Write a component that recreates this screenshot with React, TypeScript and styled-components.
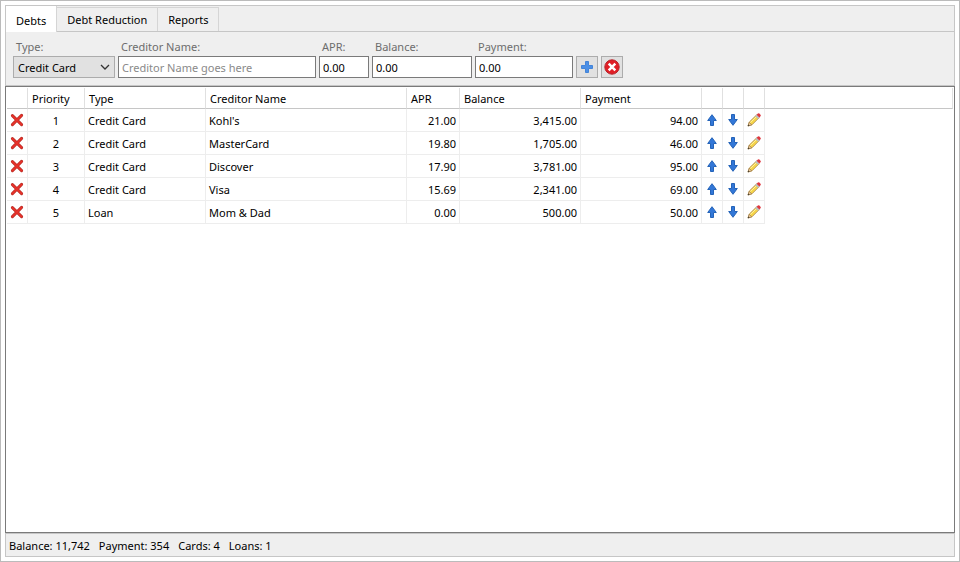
import React, { useState } from "react";
import styled, { createGlobalStyle } from "styled-components";

const GlobalStyle = createGlobalStyle`
  *, *::before, *::after { box-sizing: border-box; }
  body {
    margin: 0;
    background: #fff;
    color: #000;
    font: 11px/16px "Noto Sans", "Open Sans", sans-serif;
  }
  button, input, select { font: inherit; color: inherit; }
`;

const Window = styled.div`
  display: flex;
  min-height: 100vh;
  padding: 4px;
  border: 1px solid #bbb;
`;

const Panel = styled.main`
  flex: 1;
  min-width: 0;
  display: flex;
  flex-direction: column;
  background: #efefef;
`;

const TabStrip = styled.div`
  display: flex;
  align-items: flex-end;
  height: 27px;
  border: 1px solid #c6c6c6;
`;

const Tab = styled.button<{ $active?: boolean }>`
  height: ${(p) => (p.$active ? "26px" : "24px")};
  padding: ${(p) => (p.$active ? "3px 10px 0" : "1px 10px 0")};
  margin-bottom: ${(p) => (p.$active ? "-1px" : "0")};
  border: solid #d5d5d5;
  border-width: ${(p) => (p.$active ? "0 1px 0 0" : "1px 1px 0 0")};
  background: ${(p) => (p.$active ? "#fff" : "#efefef")};
  white-space: nowrap;
`;

const Toolbar = styled.form`
  display: flex;
  align-items: flex-end;
  gap: 3px;
  padding: 7px;
  border: solid #c6c6c6;
  border-width: 0 1px 1px;
`;

const Field = styled.div<{ $width: number }>`
  display: flex;
  flex-direction: column;
  gap: 1px;
  width: ${(p) => p.$width}px;
`;

const FieldLabel = styled.label`
  padding-left: 3px;
  color: #6d6d6d;
`;

const TextBox = styled.input`
  width: 100%;
  height: 22px;
  padding: 1px 3px 0;
  border: 1px solid #7a7a7a;
  border-radius: 0;
  background: #fff;
  &::placeholder { color: #8a8a8a; opacity: 1; }
`;

const SelectWrap = styled.div`
  display: grid;
  align-items: center;
  & > * { grid-area: 1 / 1; }
  & > svg { justify-self: end; margin-right: 5px; pointer-events: none; }
`;

const Select = styled.select`
  appearance: none;
  width: 100%;
  height: 22px;
  padding: 1px 20px 0 4px;
  border: 1px solid #acacac;
  border-radius: 0;
  background: #e1e1e1;
`;

const ToolButton = styled.button`
  display: grid;
  place-items: center;
  width: 22px;
  height: 22px;
  padding: 0;
  border: 1px solid #acacac;
  background: #e1e1e1;
`;

const GridFrame = styled.section`
  flex: 1;
  padding: 1px;
  border: 1px solid #7a7a7a;
  background: #fff;
`;

const Table = styled.table`
  width: 100%;
  table-layout: fixed;
  border-collapse: separate;
  border-spacing: 0;
`;

const Col = styled.col<{ $width?: number }>`
  width: ${(p) => (p.$width ? `${p.$width}px` : "auto")};
`;

const HeaderCell = styled.th`
  height: 21px;
  padding: 2px 4px 0;
  border-right: 1px solid #e0e0e0;
  border-bottom: 1px solid #c6c6c6;
  font-weight: 400;
  text-align: left;
  white-space: nowrap;
`;

const Cell = styled.td<{ $align?: string }>`
  height: 23px;
  padding: 2px 3px 0;
  border: solid #ededed;
  border-width: 0 1px 1px 0;
  text-align: ${(p) => p.$align || "left"};
  white-space: nowrap;
`;

const IconCell = styled(Cell)`
  padding: 0;
`;

const RowButton = styled.button`
  display: grid;
  place-items: center;
  width: 100%;
  height: 22px;
  padding: 0;
  border: 0;
  background: none;
`;

const StatusBar = styled.footer`
  display: flex;
  gap: 9px;
  height: 24px;
  padding: 4px 3px 0;
  border: 1px solid #c6c6c6;
`;

const ChevronIcon = () => (
  <svg width="10" height="6" viewBox="0 0 10 6" fill="none" stroke="#333" strokeWidth="1.3">
    <path d="M1 1l4 4 4-4" />
  </svg>
);

const PlusIcon = () => (
  <svg width="14" height="14" viewBox="0 0 14 14">
    <path d="M5.5 1.5h3v4h4v3h-4v4h-3v-4h-4v-3h4z" fill="#4b8fe6" stroke="#4384d8" strokeLinejoin="round" />
  </svg>
);

const CancelIcon = () => (
  <svg width="16" height="16" viewBox="0 0 16 16">
    <circle cx="8" cy="8" r="7.2" fill="#e01f26" stroke="#b8232a" />
    <path d="M4.7 4.7l6.6 6.6M11.3 4.7l-6.6 6.6" stroke="#fff" strokeWidth="2.5" />
  </svg>
);

const DeleteIcon = () => (
  <svg width="14" height="14" viewBox="0 0 14 14" strokeLinecap="round">
    <path d="M2.4 2.6l9.2 9M11.6 2.4l-9.2 9.2" stroke="#b52a22" strokeWidth="3" />
    <path d="M2.4 2.6l9.2 9M11.6 2.4l-9.2 9.2" stroke="#e8322b" strokeWidth="1.8" />
  </svg>
);

const ArrowIcon = ({ down = false }: { down?: boolean }) => (
  <svg width="12" height="14" viewBox="0 0 12 14">
    <path
      d={down ? "M4.5 1.5h3v5h2.8L6 12.3 1.7 6.5h2.8z" : "M4.5 12.5h3v-5h2.8L6 1.7 1.7 7.5h2.8z"}
      fill="#3277d8"
      stroke="#2463b8"
      strokeLinejoin="round"
    />
  </svg>
);

const PencilIcon = () => (
  <svg width="14" height="14" viewBox="0 0 14 14">
    <path d="M1 13l1.3-4L9.5 2l2.7 2.6L5 11.8z" fill="#f6d548" stroke="#a8854a" strokeWidth=".8" />
    <path d="M3.3 9.6l7-6.8" stroke="#fff3a0" strokeWidth="1" />
    <path d="M1 13l1.2-3.7 2.6 2.5z" fill="#e9c7a0" stroke="#9a7332" strokeWidth=".6" />
    <path d="M.7 13.3l.7-1.9 1.2 1.2z" fill="#333" />
    <path d="M8.2 3l2.8 2.8 1.5-1.4-2.8-2.8z" fill="#b9bfc4" />
    <path d="M9.6 1.7l1.3-1.1q.8-.6 1.5 0l1.1 1.1q.7.8 0 1.5l-1.1 1.2z" fill="#e0383f" />
  </svg>
);

const tabs = ["Debts", "Debt Reduction", "Reports"];

const columns: { title: string; width: number }[] = [
  { title: "", width: 21 },
  { title: "Priority", width: 57 },
  { title: "Type", width: 121 },
  { title: "Creditor Name", width: 201 },
  { title: "APR", width: 53 },
  { title: "Balance", width: 121 },
  { title: "Payment", width: 121 },
  { title: "", width: 21 },
  { title: "", width: 21 },
  { title: "", width: 21 },
];

const debts = [
  { type: "Credit Card", name: "Kohl's", apr: "21.00", balance: "3,415.00", payment: "94.00" },
  { type: "Credit Card", name: "MasterCard", apr: "19.80", balance: "1,705.00", payment: "46.00" },
  { type: "Credit Card", name: "Discover", apr: "17.90", balance: "3,781.00", payment: "95.00" },
  { type: "Credit Card", name: "Visa", apr: "15.69", balance: "2,341.00", payment: "69.00" },
  { type: "Loan", name: "Mom & Dad", apr: "0.00", balance: "500.00", payment: "50.00" },
];

const amounts = [
  { id: "apr", label: "APR:", width: 50 },
  { id: "balance", label: "Balance:", width: 100 },
  { id: "payment", label: "Payment:", width: 98 },
];

export default function App() {
  const [active, setActive] = useState("Debts");
  return (
    <>
      <GlobalStyle />
      <Window>
        <Panel>
          <TabStrip role="tablist">
            {tabs.map((t) => (
              <Tab key={t} type="button" role="tab" aria-selected={t === active} $active={t === active} onClick={() => setActive(t)}>
                {t}
              </Tab>
            ))}
          </TabStrip>
          <Toolbar onSubmit={(e) => e.preventDefault()}>
            <Field $width={102}>
              <FieldLabel htmlFor="type">Type:</FieldLabel>
              <SelectWrap>
                <Select id="type" defaultValue="Credit Card">
                  <option>Credit Card</option>
                  <option>Loan</option>
                </Select>
                <ChevronIcon />
              </SelectWrap>
            </Field>
            <Field $width={198}>
              <FieldLabel htmlFor="creditor">Creditor Name:</FieldLabel>
              <TextBox id="creditor" placeholder="Creditor Name goes here" />
            </Field>
            {amounts.map((a) => (
              <Field key={a.id} $width={a.width}>
                <FieldLabel htmlFor={a.id}>{a.label}</FieldLabel>
                <TextBox id={a.id} defaultValue="0.00" />
              </Field>
            ))}
            <ToolButton type="submit" aria-label="Add debt"><PlusIcon /></ToolButton>
            <ToolButton type="reset" aria-label="Clear"><CancelIcon /></ToolButton>
          </Toolbar>
          <GridFrame>
            <Table>
              <colgroup>
                {columns.map((c, i) => <Col key={i} $width={c.width} />)}
                <Col />
              </colgroup>
              <thead>
                <tr>
                  {columns.map((c, i) => <HeaderCell key={i}>{c.title}</HeaderCell>)}
                  <HeaderCell />
                </tr>
              </thead>
              <tbody>
                {debts.map((d, i) => (
                  <tr key={d.name}>
                    <IconCell><RowButton aria-label={`Delete ${d.name}`}><DeleteIcon /></RowButton></IconCell>
                    <Cell $align="center">{i + 1}</Cell>
                    <Cell>{d.type}</Cell>
                    <Cell>{d.name}</Cell>
                    <Cell $align="right">{d.apr}</Cell>
                    <Cell $align="right">{d.balance}</Cell>
                    <Cell $align="right">{d.payment}</Cell>
                    <IconCell><RowButton aria-label={`Move ${d.name} up`}><ArrowIcon /></RowButton></IconCell>
                    <IconCell><RowButton aria-label={`Move ${d.name} down`}><ArrowIcon down /></RowButton></IconCell>
                    <IconCell><RowButton aria-label={`Edit ${d.name}`}><PencilIcon /></RowButton></IconCell>
                  </tr>
                ))}
              </tbody>
            </Table>
          </GridFrame>
          <StatusBar>
            <span>Balance: 11,742</span>
            <span>Payment: 354</span>
            <span>Cards: 4</span>
            <span>Loans: 1</span>
          </StatusBar>
        </Panel>
      </Window>
    </>
  );
}
